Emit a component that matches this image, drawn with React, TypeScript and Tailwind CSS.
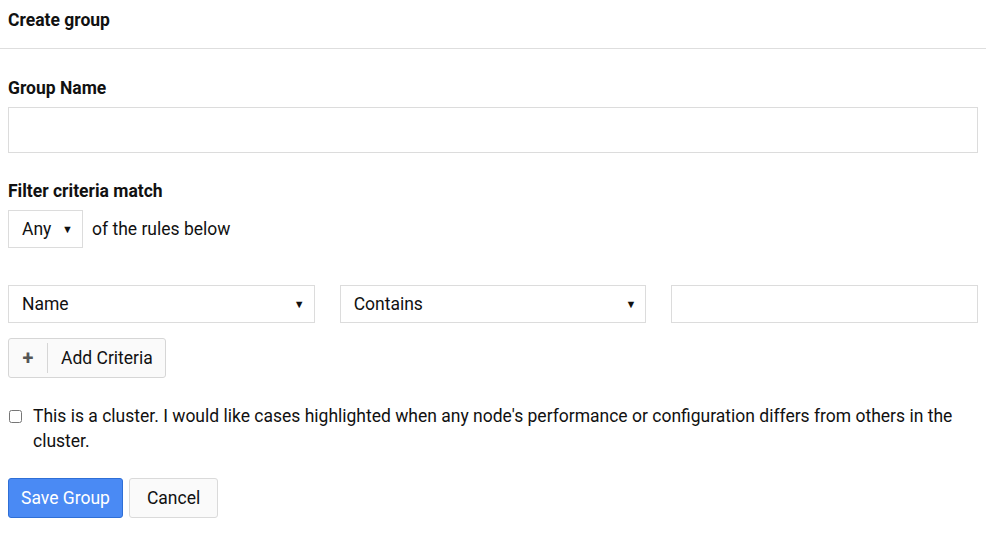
import React, { useState } from "react";

interface SelectBoxProps {
  value: string;
  className?: string;
}

// Flat select look-alike with the small black triangle on the right
const SelectBox = ({ value, className }: SelectBoxProps) => {
  return (
    <div
      className={`flex h-[38px] items-center justify-between border border-[#dcdcdc] bg-white pl-[13px] pr-[9px] text-[17.5px] text-[#111] ${className ?? ""}`}
    >
      <span>{value}</span>
      <span className="text-[11px] leading-none text-[#111]">▼</span>
    </div>
  );
};

const App = () => {
  const [groupName, setGroupName] = useState<string>(""); // Group name field
  const [criteriaValue, setCriteriaValue] = useState<string>(""); // Value for the criteria row
  const [isCluster, setIsCluster] = useState<boolean>(false); // Cluster checkbox

  return (
    <div className="min-h-[533px] bg-white text-[#111]" style={{ fontFamily: "Roboto, 'Liberation Sans', sans-serif" }}>
      {/* Header */}
      <div className="flex h-[49px] items-center border-b border-[#dedede] px-[8px] pb-[7px]">
        <h1 className="text-[17.5px] font-bold">Create group</h1>
      </div>

      <div className="px-[8px]">
        {/* Group name */}
        <h2 className="mt-[27px] text-[17.5px] font-bold leading-[24px]">Group Name</h2>
        <input
          type="text"
          value={groupName}
          onChange={e => setGroupName(e.target.value)}
          className="mt-[7px] block h-[46px] w-[970px] border border-[#dcdcdc] px-3 outline-none"
        />

        {/* Filter match */}
        <h2 className="mt-[26px] text-[17.5px] font-bold leading-[24px]">Filter criteria match</h2>
        <div className="mt-[7px] flex items-center gap-[9px]">
          <SelectBox value="Any" className="w-[75px]" />
          <span className="text-[17.5px]">of the rules below</span>
        </div>

        {/* Criteria row */}
        <div className="mt-[37px] grid w-[970px] grid-cols-3 gap-[25px]">
          <SelectBox value="Name" />
          <SelectBox value="Contains" />
          <input
            type="text"
            value={criteriaValue}
            onChange={e => setCriteriaValue(e.target.value)}
            className="block h-[38px] border border-[#dcdcdc] px-3 outline-none"
          />
        </div>

        {/* Add criteria button */}
        <button className="mt-[15px] flex h-[40px] items-center rounded-[3px] border border-[#d6d6d6] bg-[#fafafa] text-[17.5px] text-[#111]">
          <span className="flex h-[30px] w-[39px] items-center justify-center border-r border-[#d6d6d6] text-[20px] font-bold text-[#555]">
            +
          </span>
          <span className="pl-[13px] pr-[12px]">Add Criteria</span>
        </button>

        {/* Cluster checkbox */}
        <label className="mt-[26px] flex items-start gap-[11px] text-[17.5px] leading-[25px]">
          <input
            type="checkbox"
            checked={isCluster}
            onChange={e => setIsCluster(e.target.checked)}
            className="mt-[6px] ml-[1px] h-[13px] w-[13px] shrink-0"
          />
          <span className="w-[945px]">
            This is a cluster. I would like cases highlighted when any node's performance or configuration differs from
            others in the cluster.
          </span>
        </label>

        {/* Actions */}
        <div className="mt-[24px] flex gap-[6px]">
          <button className="h-[40px] rounded-[3px] border border-[#2f6fd6] bg-[#4a8af4] px-[12px] text-[17.5px] text-white">
            Save Group
          </button>
          <button className="h-[40px] rounded-[3px] border border-[#dadada] bg-[#fafafa] px-[17px] text-[17.5px] text-[#111]">
            Cancel
          </button>
        </div>
      </div>
    </div>
  );
};

export default App;
